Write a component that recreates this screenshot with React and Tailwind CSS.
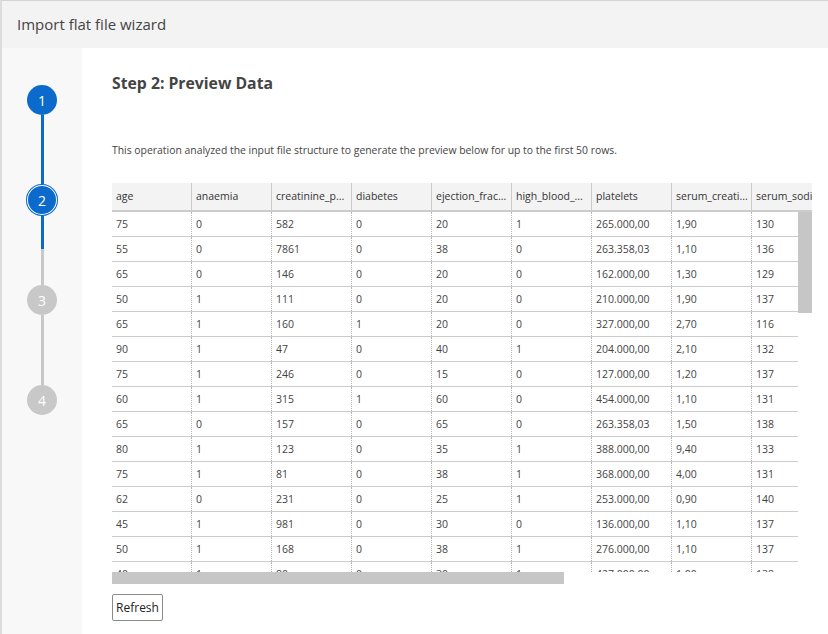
import React from "react";

const headers = [
  "age",
  "anaemia",
  "creatinine_p...",
  "diabetes",
  "ejection_frac...",
  "high_blood_...",
  "platelets",
  "serum_creati...",
  "serum_sodium",
];

const rows = [
  ["75", "0", "582", "0", "20", "1", "265.000,00", "1,90", "130"],
  ["55", "0", "7861", "0", "38", "0", "263.358,03", "1,10", "136"],
  ["65", "0", "146", "0", "20", "0", "162.000,00", "1,30", "129"],
  ["50", "1", "111", "0", "20", "0", "210.000,00", "1,90", "137"],
  ["65", "1", "160", "1", "20", "0", "327.000,00", "2,70", "116"],
  ["90", "1", "47", "0", "40", "1", "204.000,00", "2,10", "132"],
  ["75", "1", "246", "0", "15", "0", "127.000,00", "1,20", "137"],
  ["60", "1", "315", "1", "60", "0", "454.000,00", "1,10", "131"],
  ["65", "0", "157", "0", "65", "0", "263.358,03", "1,50", "138"],
  ["80", "1", "123", "0", "35", "1", "388.000,00", "9,40", "133"],
  ["75", "1", "81", "0", "38", "1", "368.000,00", "4,00", "131"],
  ["62", "0", "231", "0", "25", "1", "253.000,00", "0,90", "140"],
  ["45", "1", "981", "0", "30", "0", "136.000,00", "1,10", "137"],
  ["50", "1", "168", "0", "38", "1", "276.000,00", "1,10", "137"],
  ["40", "1", "80", "0", "30", "1", "427.000,00", "1,00", "138"],
];

function Step({ n, state }) {
  if (state === "done") {
    return (
      <div className="w-[30px] h-[30px] rounded-full bg-[#0b6acb] text-white flex items-center justify-center text-[14px] shrink-0">
        {n}
      </div>
    );
  }
  if (state === "current") {
    return (
      <div className="w-[32px] h-[32px] rounded-full bg-[#0b6acb] text-white flex items-center justify-center text-[14px] shrink-0 shadow-[inset_0_0_0_1px_#0b6acb,inset_0_0_0_2px_#ffffff] -my-px">
        {n}
      </div>
    );
  }
  return (
    <div className="w-[30px] h-[30px] rounded-full bg-[#c8c8c8] text-white flex items-center justify-center text-[14px] shrink-0">
      {n}
    </div>
  );
}

export default function App() {
  return (
    <div
      className="w-[828px] h-[634px] overflow-hidden flex flex-col border-l-2 border-[#dcdcdc] bg-white"
      style={{ fontFamily: '"Open Sans", "Noto Sans", sans-serif' }}
    >
      <div className="h-[48px] shrink-0 bg-[#f3f3f3] border-t border-[#d4d4d4] flex items-center pl-[15px] text-[15px] text-[#444]">
        Import flat file wizard
      </div>
      <div className="flex flex-1 min-h-0">
        <div className="w-[80px] shrink-0 bg-[#f8f8f9] flex flex-col items-center pt-[37px]">
          <Step n="1" state="done" />
          <div className="w-[3px] h-[70px] bg-[#0b6acb]" />
          <Step n="2" state="current" />
          <div className="w-[3px] h-[34px] bg-[#0b6acb]" />
          <div className="w-[3px] h-[36px] bg-[#c8c8c8]" />
          <Step n="3" state="todo" />
          <div className="w-[3px] h-[70px] bg-[#c8c8c8]" />
          <Step n="4" state="todo" />
        </div>
        <div className="flex-1 min-w-0 pl-[30px] pt-[24px] flex flex-col">
          <div className="text-[15.75px] leading-[22px] font-bold text-[#444]">
            Step 2: Preview Data
          </div>
          <div className="mt-[48px] text-[10.4px] leading-[16px] text-[#444]">
            This operation analyzed the input file structure to generate the preview below for up to the first 50 rows.
          </div>
          <div className="mt-[25px] w-[700px] overflow-hidden text-[10.5px] text-[#444]">
            <div className="flex h-[29px] bg-[#f3f3f3] border-b-2 border-[#cccccc] whitespace-nowrap">
              {headers.map((h, i) => (
                <div
                  key={i}
                  className="w-[80px] shrink-0 border-r border-[#cccccc] pl-1 flex items-center text-[#333] overflow-hidden"
                >
                  {h}
                </div>
              ))}
            </div>
            <div className="flex h-[360px]">
              <div className="w-[686px] shrink-0 overflow-hidden">
                {rows.map((r, ri) => (
                  <div key={ri} className="flex h-[25px] border-b border-[#cccccc] whitespace-nowrap w-[760px]">
                    {r.map((c, ci) => (
                      <div
                        key={ci}
                        className="w-[80px] shrink-0 border-r border-dotted border-[#b4b4b4] pl-1 leading-[24px]"
                      >
                        {c}
                      </div>
                    ))}
                  </div>
                ))}
              </div>
              <div className="w-[14px] shrink-0">
                <div className="h-[101px] bg-[#c6c6c6]" />
              </div>
            </div>
            <div className="h-[12px]">
              <div className="h-[12px] w-[452px] bg-[#c6c6c6]" />
            </div>
          </div>
          <div className="mt-[10px]">
            <button className="h-[27px] w-[51px] border border-[#8a8a8a] rounded-[2px] bg-white text-[12px] text-[#222] flex items-center justify-center">
              Refresh
            </button>
          </div>
        </div>
      </div>
    </div>
  );
}
